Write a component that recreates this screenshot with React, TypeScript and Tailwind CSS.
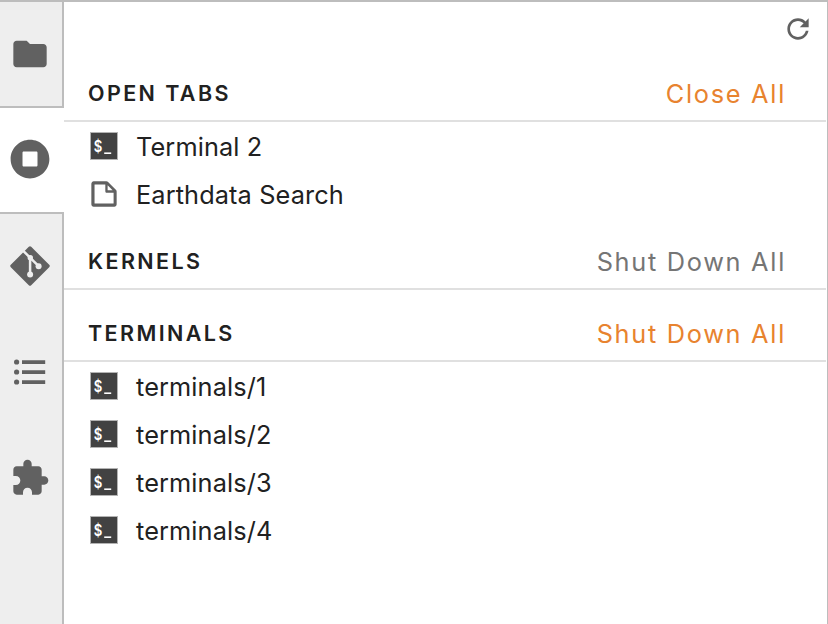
import type { ReactNode } from "react";

function FolderIcon() {
  return (
    <svg className="size-10" viewBox="0 0 24 24" fill="currentColor">
      <path d="M10 4H4c-1.1 0-1.99.9-1.99 2L2 18c0 1.1.9 2 2 2h16c1.1 0 2-.9 2-2V8c0-1.1-.9-2-2-2h-8l-2-2z" />
    </svg>
  );
}

function RunningIcon() {
  return (
    <svg className="size-10" viewBox="0 0 512 512" fill="currentColor">
      <path d="M256 8C119 8 8 119 8 256s111 248 248 248 248-111 248-248S393 8 256 8zm96 328c0 8.8-7.2 16-16 16H176c-8.8 0-16-7.2-16-16V176c0-8.8 7.2-16 16-16h160c8.8 0 16 7.2 16 16v160z" />
    </svg>
  );
}

function GitIcon() {
  return (
    <svg className="size-10" viewBox="0 0 40 40">
      <path d="M20 2 38 20 20 38 2 20z" fill="#616161" stroke="#616161" strokeWidth="3.4" strokeLinejoin="round" />
      <g stroke="#eee" strokeWidth="2.5" fill="none">
        <path d="M13 4.6 28.6 20.2M20.1 12v16" />
      </g>
      <g fill="#eee">
        <circle cx="20.3" cy="11.8" r="2.7" />
        <circle cx="20.1" cy="28.6" r="3" />
        <circle cx="28.6" cy="20.3" r="3" />
      </g>
    </svg>
  );
}

function ListIcon() {
  return (
    <svg className="h-[26px] w-8" viewBox="0 0 32 26" fill="currentColor">
      <circle cx="2.6" cy="3" r="2.6" />
      <circle cx="2.6" cy="13" r="2.6" />
      <circle cx="2.6" cy="23" r="2.6" />
      <path d="M8 1.2h23.2v3.7H8zM8 11.2h23.2v3.7H8zM8 21.2h23.2v3.7H8z" />
    </svg>
  );
}

function PuzzleIcon() {
  return (
    <svg className="size-10" viewBox="0 0 24 24" fill="currentColor">
      <path d="M20.5 11H19V7c0-1.1-.9-2-2-2h-4V3.5C13 2.12 11.88 1 10.5 1S8 2.12 8 3.5V5H4c-1.1 0-1.99.9-1.99 2v3.8H3.5c1.49 0 2.7 1.21 2.7 2.7s-1.21 2.7-2.7 2.7H2V20c0 1.1.9 2 2 2h3.8v-1.5c0-1.49 1.21-2.7 2.7-2.7 1.49 0 2.7 1.21 2.7 2.7V22H17c1.1 0 2-.9 2-2v-4h1.5c1.38 0 2.5-1.12 2.5-2.5S21.88 11 20.5 11z" />
    </svg>
  );
}

function RefreshIcon() {
  return (
    <svg className="size-8" viewBox="0 0 18 18" fill="currentColor">
      <path d="M9 13.5c-2.49 0-4.5-2.01-4.5-4.5S6.51 4.5 9 4.5c1.24 0 2.36.52 3.17 1.33L10 8h5V3l-1.76 1.76C12.15 3.68 10.66 3 9 3 5.69 3 3.01 5.69 3.01 9S5.69 15 9 15c2.97 0 5.43-2.16 5.9-5h-1.52c-.46 2-2.24 3.5-4.38 3.5z" />
    </svg>
  );
}

function FileIcon() {
  return (
    <svg className="size-8" viewBox="0 0 22 22" fill="#616161">
      <path d="M19.3 8.2l-5.5-5.5c-.3-.3-.7-.5-1.2-.5H3.9c-.8.1-1.6.9-1.6 1.8v14.1c0 .9.7 1.6 1.6 1.6h14.2c.9 0 1.6-.7 1.6-1.6V9.4c.1-.5-.1-.9-.4-1.2zm-5.8-3.3l3.4 3.6h-3.4V4.9zm3.9 12.7H4.7c-.1 0-.2 0-.2-.2V4.7c0-.2.1-.3.2-.3h7.2v4.4s0 .8.3 1.1c.3.3 1.1.3 1.1.3h4.3v7.2s-.1.2-.2.2z" />
    </svg>
  );
}

function TerminalIcon() {
  return (
    <svg className="size-8" viewBox="0 0 32 32">
      <rect x="2.5" y="2.5" width="27" height="27" fill="#424242" stroke="#b3b3b3" />
      <text x="5.8" y="22.3" fontSize="15.5" fontWeight="600" fill="#fff" className="font-['Inter',sans-serif]" textLength="8.6" lengthAdjust="spacingAndGlyphs">$</text>
      <path d="M16.2 22.4h7v1.6h-7z" fill="#fff" />
    </svg>
  );
}

function Row({ icon, label }: { icon: ReactNode; label: string }) {
  return (
    <li className="flex h-12 items-center pl-6">
      {icon}
      <span className="ml-4 pt-0.5 text-[25.3px] leading-none tracking-[0.12px]">{label}</span>
    </li>
  );
}

type SectionProps = { title: string; action: string; disabled?: boolean; children?: ReactNode };

function Section({ title, action, disabled, children }: SectionProps) {
  return (
    <section className="mb-6">
      <header className="flex h-12 items-center justify-between border-b-2 border-[#e0e0e0] pr-10 pl-6">
        <h2 className="-mt-1.5 text-[21.5px] leading-none font-semibold tracking-[2.4px]">{title}</h2>
        <button className={`-mt-1.5 text-[25.3px] leading-none tracking-[1.72px] ${disabled ? "text-[#757575]" : "text-[#e8832f]"}`}>
          {action}
        </button>
      </header>
      <ul>{children}</ul>
    </section>
  );
}

export default function App() {
  return (
    <div className="flex h-[624px] w-[828px] overflow-hidden border-t-2 border-r border-[#bdbdbd] bg-white font-['Inter',sans-serif] text-[#212121]">
      <nav className="flex w-16 shrink-0 flex-col text-[#616161]">
        <div className="flex h-[106px] items-center justify-center border-r-2 border-b-2 border-[#bdbdbd] bg-[#eee] pr-0.5">
          <FolderIcon />
        </div>
        <div className="flex h-[104px] items-center justify-center pr-1 pb-0.5">
          <RunningIcon />
        </div>
        <div className="flex flex-1 flex-col border-t-2 border-r-2 border-[#bdbdbd] bg-[#eee] pr-0.5">
          <div className="flex h-[104px] items-center justify-center">
            <GitIcon />
          </div>
          <div className="flex h-[106px] items-center justify-center pt-0.5">
            <ListIcon />
          </div>
          <div className="flex h-[106px] items-center justify-center pt-0.5">
            <PuzzleIcon />
          </div>
        </div>
      </nav>
      <main className="min-w-0 flex-1 pr-px">
        <div className="flex h-[72px] items-start justify-end pt-[11px] pr-3">
          <button className="text-[#616161]">
            <RefreshIcon />
          </button>
        </div>
        <Section title="OPEN TABS" action="Close All">
          <Row icon={<TerminalIcon />} label="Terminal 2" />
          <Row icon={<FileIcon />} label="Earthdata Search" />
        </Section>
        <Section title="KERNELS" action="Shut Down All" disabled />
        <Section title="TERMINALS" action="Shut Down All">
          <Row icon={<TerminalIcon />} label="terminals/1" />
          <Row icon={<TerminalIcon />} label="terminals/2" />
          <Row icon={<TerminalIcon />} label="terminals/3" />
          <Row icon={<TerminalIcon />} label="terminals/4" />
        </Section>
      </main>
    </div>
  );
}
